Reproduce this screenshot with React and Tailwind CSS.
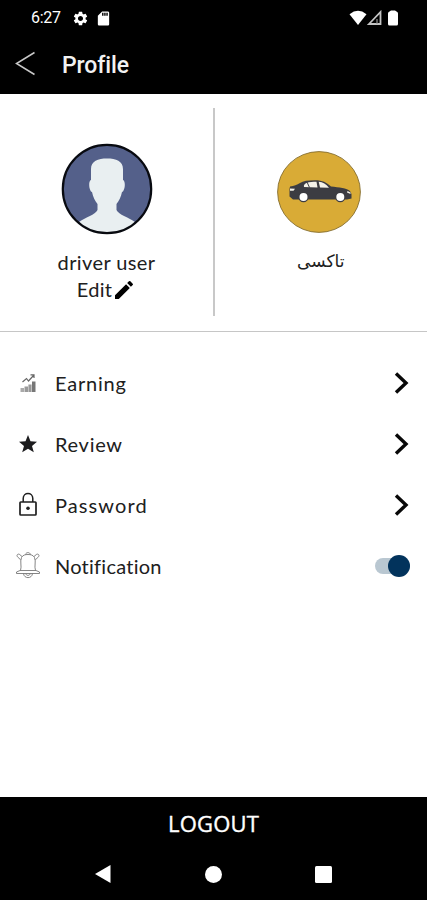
import { useState } from "react";
import { MdEdit, MdSettings, MdSdCard } from "react-icons/md";

function StatusBar() {
  return (
    <div className="flex h-9 items-center justify-between pr-[29px] pl-[31px]">
      <div className="flex items-center">
        <span className="w-[41px] font-['Roboto',sans-serif] text-base leading-none tracking-[-0.3px]">6:27</span>
        <MdSettings className="size-[17px]" />
        <MdSdCard className="ml-[6px] size-[17px]" />
      </div>
      <div className="flex items-center">
        <svg width="18" height="16" viewBox="0 0 18 16" fill="currentColor">
          <path d="M0.5 4.2Q9 -2.6 17.5 4.2L9 15Z" />
        </svg>
        <svg width="16" height="16" viewBox="0 0 16 16" fill="none">
          <path d="M2 14L13.5 2V14Z" stroke="#c4c4c4" strokeWidth="1.8" />
          <path d="M10 9V13.5" stroke="#777" strokeWidth="1.5" />
        </svg>
        <svg className="ml-[5px]" width="10" height="16" viewBox="0 0 10 16" fill="currentColor">
          <path d="M3 0.5H7L8.5 1.5Q10 2 10 3.5V14Q10 15.5 8.5 15.5H1.5Q0 15.5 0 14V3.5Q0 2 1.5 1.5Z" />
        </svg>
      </div>
    </div>
  );
}

function Avatar() {
  return (
    <svg width="92" height="92" viewBox="0 0 92 92">
      <defs>
        <clipPath id="avatar-clip">
          <circle cx="46" cy="46" r="44" />
        </clipPath>
      </defs>
      <circle cx="46" cy="46" r="44" fill="#54608a" />
      <path
        clipPath="url(#avatar-clip)"
        fill="#e9eff1"
        d="M30 26C30 18 37 15.5 46 15.5S62 18 62 26V37C65 38 64 48 61 49C60 54 58 58 55.5 61V67C58 72 67 74 74 79L80 92H12L18 79C25 74 34 72 36.5 67V61C34 58 32 54 31 49C28 48 27 38 30 37Z"
      />
      <circle cx="46" cy="46" r="44.2" fill="none" stroke="#080a10" strokeWidth="2.2" />
    </svg>
  );
}

function TaxiBadge() {
  return (
    <svg className="mr-[3px]" width="84" height="82" viewBox="0 0 84 82">
      <ellipse cx="42" cy="41" rx="41.4" ry="40.4" fill="#d9ab36" stroke="#846d2f" strokeWidth="0.9" />
      <path
        fill="#3c3c42"
        d="M13 35.5C17 35 20 34 23 32C26 30 31 29.3 38 29.3C46 29.3 49 31.5 54 35.5C62 36.5 70 37 73 40L74.5 43V47.5L70 48.5H16L12.5 45.5V38Z"
      />
      <path fill="#f5f2e9" d="M27 36C26 32 32 30.8 39.5 30.8L40.5 36.5ZM41.7 30.8C46 31 49 33 52 36.7L43 36.5Z" />
      <path stroke="#3c3c42" strokeWidth="1" d="M30 31L32.5 36.5" />
      <path fill="#f5f2e9" d="M13 37.5L18 37.8L16.5 39.7H13ZM70.5 40L73.5 41.5V43L70 41.5Z" />
      <circle cx="26.5" cy="46" r="5.2" fill="#3c3c42" />
      <circle cx="63.3" cy="46" r="5.2" fill="#3c3c42" />
      <circle cx="26.5" cy="46" r="4" fill="#fff" />
      <circle cx="63.3" cy="46" r="4" fill="#fff" />
    </svg>
  );
}

function EarningIcon() {
  return (
    <svg className="mt-0.5" width="24" height="30" viewBox="0 0 24 30" fill="none">
      <path stroke="#666" strokeWidth="1.2" d="M6.5 13L10.5 9.5L12.5 12L18 6M14.5 5.8H18V9" />
      <path fill="#aaa" d="M4.5 19H8V23H4.5Z" />
      <path fill="#999" d="M8.5 17.5H12V23H8.5Z" />
      <path fill="#999" d="M12.4 15.5H15.6V23H12.4Z" />
      <path fill="#777" d="M16 12.5H19.5V23H16Z" />
    </svg>
  );
}

function StarIcon() {
  return (
    <svg className="mt-0.5" width="24" height="30" viewBox="0 0 24 30" fill="#1c1c1e">
      <path d="M12 5L14.5 11.3L21 11.7L16 16L17.8 22.3L12 18.8L6.2 22.3L8 16L3 11.7L9.5 11.3Z" />
    </svg>
  );
}

function LockIcon() {
  return (
    <svg width="24" height="30" viewBox="0 0 24 30" fill="none" stroke="#1f1f1f">
      <rect x="4" y="12" width="16" height="13" rx="0.8" strokeWidth="1.7" />
      <path strokeWidth="1.5" d="M7.2 12V8.5C7.2 1.8 16.8 1.8 16.8 8.5V12" />
      <circle cx="12" cy="18.3" r="1.8" fill="#1f1f1f" stroke="none" />
    </svg>
  );
}

function BellIcon() {
  return (
    <svg width="26" height="30" viewBox="0 0 26 30" fill="none" stroke="#777" strokeWidth="0.9">
      <path d="M5.5 19.5C7 15 4.7 11 6.5 6.5C8 4 10 3.5 13 3.5S18 4 19.5 6.5C21.3 11 19 15 20.5 19.5" />
      <path d="M10.5 3.5C11 1 15 1 15.5 3.5M5.8 9L2.5 5.8C1 4 3.3 2 5 3.8L7 5.5M20.2 9L23.5 5.8C25 4 22.7 2 21 3.8L19 5.5" />
      <path d="M5 19.5H21L24.5 21V22.5H1.5V21ZM8.5 22.5C9 28 17 28 17.5 22.5" />
      <path d="M10.8 22.5C11 25 15 25 15.2 22.5" />
    </svg>
  );
}

function ChevronIcon() {
  return (
    <svg className="mr-[17px]" width="16" height="24" viewBox="0 0 16 24" fill="none" stroke="#080808" strokeWidth="3.4">
      <path d="M2 2.5L12 12L2 21.5" />
    </svg>
  );
}

function MenuRow({ icon, label, labelClass, children }) {
  return (
    <div className="flex h-[60.9px] items-center">
      <div className="flex w-[55px] justify-center">{icon}</div>
      <span className={`flex-1 whitespace-nowrap text-xl leading-none ${labelClass}`}>{label}</span>
      {children}
    </div>
  );
}

function App() {
  const [notify, setNotify] = useState(true);

  return (
    <div className="flex h-[900px] w-[427px] flex-col bg-white font-['Lato',sans-serif] text-[#202020]">
      <header className="h-[93.5px] shrink-0 bg-black text-white">
        <StatusBar />
        <div className="flex h-[57px] items-center pl-[15px]">
          <svg className="-mt-0.5" width="21" height="26" viewBox="0 0 21 26" fill="none" stroke="#c8c8c8" strokeWidth="1.5">
            <path d="M19.5 1.5L1.5 12.5L19.5 23.5" />
          </svg>
          <h1 className="mt-0.5 ml-[26px] font-['Roboto',sans-serif] text-[23px] leading-none font-medium tracking-[-0.1px] text-[#f2f2f2]">Profile</h1>
        </div>
      </header>

      <section className="flex h-[238px] shrink-0 border-b border-[#c6c6c6] py-[14.5px]">
        <div className="flex w-[213px] flex-col items-center pt-[35px]">
          <Avatar />
          <p className="mt-[14px] text-xl leading-[27px] tracking-[0.4px]">driver user</p>
          <button type="button" className="flex h-[27px] items-center text-xl leading-[27px] tracking-[0.3px]">
            Edit
            <MdEdit className="size-6 text-black" />
          </button>
        </div>
        <div className="w-[1.5px] bg-[#c8c8c8]" />
        <div className="flex flex-1 flex-col items-center pt-[43px]">
          <TaxiBadge />
          <p dir="rtl" className="mt-[14px] font-['DejaVu_Sans',sans-serif] text-[17px] leading-[28px]">تاکسی</p>
        </div>
      </section>

      <main className="flex-1 pt-[21px]">
        <MenuRow icon={<EarningIcon />} label="Earning" labelClass="tracking-[0.8px]">
          <ChevronIcon />
        </MenuRow>
        <MenuRow icon={<StarIcon />} label="Review" labelClass="tracking-[0.7px]">
          <ChevronIcon />
        </MenuRow>
        <MenuRow icon={<LockIcon />} label="Password" labelClass="tracking-[1.1px]">
          <ChevronIcon />
        </MenuRow>
        <MenuRow icon={<BellIcon />} label="Notification" labelClass="tracking-[0.25px]">
          <button
            type="button"
            aria-label="Notification"
            onClick={() => setNotify(!notify)}
            className={`mr-[17px] flex h-4 w-[35px] items-center rounded-full bg-[#b9c7d1] ${notify ? "justify-end" : "justify-start"}`}
          >
            <span className="size-[22px] rounded-full bg-[#02335c]" />
          </button>
        </MenuRow>
      </main>

      <footer className="h-[103.5px] shrink-0 bg-black text-white">
        <button type="button" className="flex h-[52px] w-full items-center justify-center font-['Open_Sans',sans-serif] text-[22px] leading-none font-medium tracking-[0.2px] [-webkit-text-stroke:0.4px_white]">LOGOUT</button>
        <div className="flex h-[51px] items-center justify-between pr-[95px] pl-[94px]">
          <svg width="18" height="20" viewBox="0 0 18 20" fill="currentColor">
            <path d="M1 10L16.5 1V19Z" />
          </svg>
          <span className="size-[17px] rounded-full bg-white" />
          <span className="size-[17px] rounded-[1.5px] bg-white" />
        </div>
      </footer>
    </div>
  );
}

export default App;
